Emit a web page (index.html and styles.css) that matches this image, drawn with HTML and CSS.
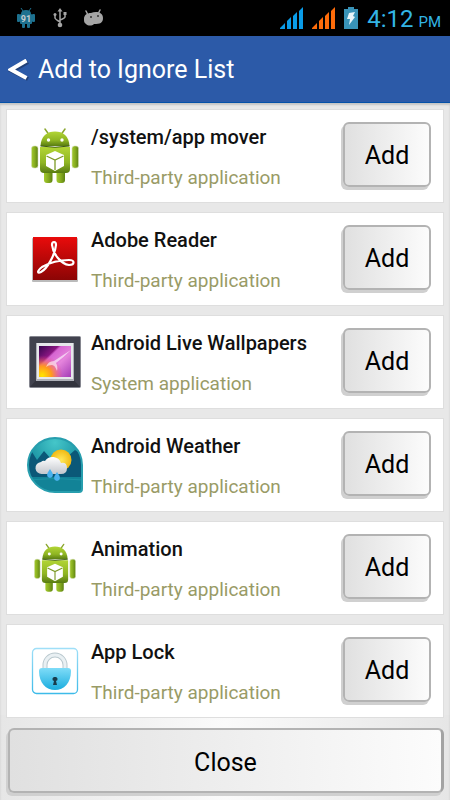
FILE: index.html
```html
<!DOCTYPE html>
<html lang="en">
<head>
    <meta charset="UTF-8">
    <meta name="viewport" content="width=device-width, initial-scale=1.0">
    <title>Add to Ignore List</title>
    <link rel="stylesheet" href="styles.css">
</head>
<body>
    <!-- shared shapes -->
    <svg class="defs" width="0" height="0" aria-hidden="true">
        <defs>
            <linearGradient id="green" x1="0" y1="0" x2="0" y2="1">
                <stop offset="0" stop-color="#b2d535"/>
                <stop offset="0.6" stop-color="#8fb522"/>
                <stop offset="1" stop-color="#587c12"/>
            </linearGradient>
            <linearGradient id="limb" x1="0" y1="0" x2="1" y2="0">
                <stop offset="0" stop-color="#a3c92c"/>
                <stop offset="0.5" stop-color="#86ac1f"/>
                <stop offset="1" stop-color="#5d8212"/>
            </linearGradient>
            <symbol id="robot" viewBox="0 0 48 56">
                <path d="M14 1l3.500 5M34 1l-3.500 5" stroke="#8aa62e" stroke-width="1.500" stroke-linecap="round"/>
                <rect x="0.500" y="18" width="6.500" height="22" rx="2.500" fill="url(#limb)" stroke="#d5dfb5" stroke-width="0.600"/>
                <rect x="41" y="18" width="6.500" height="22" rx="2.500" fill="url(#limb)" stroke="#d5dfb5" stroke-width="0.600"/>
                <rect x="13" y="40" width="8.500" height="15" rx="3" fill="url(#limb)"/>
                <rect x="25.500" y="40" width="8.500" height="15" rx="3" fill="url(#limb)"/>
                <path d="M9 19h30v22q0 4-4 4H13q-4 0-4-4z" fill="url(#green)"/>
                <path d="M9.500 18C10 8 16 3.500 24 3.500S38 8 38.500 18z" fill="url(#green)"/>
                <path d="M9.500 18q14.500 2.500 29 0" fill="none" stroke="#3c5a0c" stroke-width="1"/>
                <circle cx="17.500" cy="12" r="1.700" fill="#fff"/>
                <circle cx="31" cy="12" r="1.700" fill="#fff"/>
                <path d="M24 23l9 4v11l-9 5-9-5V27z" fill="#fff"/>
                <path d="M15.500 28l8.500 4 8.500-4M24 32v10" fill="none" stroke="#7c9a26" stroke-width="1.300"/>
            </symbol>
        </defs>
    </svg>

    <div class="status-bar">
        <div class="status-left">
            <svg width="18" height="20" viewBox="0 0 18 20" fill="#1d718f">
                <path d="M4 0l2 3M14 0l-2 3" stroke="#1d718f"/>
                <path d="M4 6q0-4 5-4t5 4z"/>
                <rect x="0" y="6" width="3" height="8" rx="1"/>
                <rect x="15" y="6" width="3" height="8" rx="1"/>
                <rect x="3" y="6" width="12" height="10" rx="1"/>
                <rect x="5" y="14" width="3" height="6" rx="1"/>
                <rect x="10" y="14" width="3" height="6" rx="1"/>
                <text class="badge" x="9" y="14" text-anchor="middle" fill="#c4ccd0">91</text>
            </svg>
            <svg width="14" height="20" viewBox="0 0 14 20" fill="none" stroke="#a5a5a5" stroke-width="1.500">
                <path d="M7 2v14M2 7v3q0 1 5 4M12 6v3q0 1-5 3"/>
                <path d="M7 0l2.500 3.500h-5z" fill="#a5a5a5" stroke="none"/>
                <circle cx="2" cy="6.500" r="1.500" fill="#a5a5a5" stroke="none"/>
                <rect x="10.500" y="4" width="3" height="3" fill="#a5a5a5" stroke="none"/>
                <circle cx="7" cy="17" r="2.300" fill="#a5a5a5" stroke="none"/>
            </svg>
            <svg width="21" height="18" viewBox="0 0 21 18">
                <path d="M3 2l2 4M17 1l-2 4" stroke="#a5a5a5" stroke-width="1.500" stroke-linecap="round"/>
                <path d="M1 10C1 6 4 4 8 4c5-2 12-1 12 5 0 5-3 6-9 6-2 2-6 2-8 0-2-1-2-3-2-5z" fill="#a5a5a5"/>
                <circle cx="8" cy="8" r="1" fill="#333"/>
                <circle cx="15" cy="7" r="1" fill="#333"/>
            </svg>
        </div>
        <div class="status-right">
            <svg class="signal-blue" width="23" height="22" viewBox="0 0 23 22">
                <path d="M0 22v-1l5-5v6zM7 22v-8l4-4v12zM13 22V9l4-4v17zM19 22V4l4-4v22z"/>
            </svg>
            <svg class="signal-orange" width="23" height="22" viewBox="0 0 23 22">
                <path d="M0 22v-1l5-5v6zM7 22v-8l4-4v12zM13 22V9l4-4v17zM19 22V4l4-4v22z"/>
            </svg>
            <svg width="14" height="22" viewBox="0 0 14 22">
                <path d="M4 0h6v2h4v20H0V2h4z" fill="#3993b8"/>
                <path d="M5 6l6-1-2 4 2 1-6 8 1-6-3 0z" fill="#e9f5fa"/>
            </svg>
            <span class="clock">4:12<small>PM</small></span>
        </div>
    </div>

    <header>
        <a href="#" class="back" aria-label="Back">
            <svg width="22" height="22" viewBox="0 0 22 22" fill="none" stroke-width="4">
                <path d="M20 3L4 12l16 8" stroke="#1d3564" opacity="0.700"/>
                <path d="M18.500 1.500L3 10.500l15.500 8.500" stroke="#fff"/>
            </svg>
        </a>
        <h1>Add to Ignore List</h1>
    </header>

    <main>
        <ul class="app-list">
            <li class="app">
                <div class="app-icon"><svg width="48" height="56"><use href="#robot"/></svg></div>
                <div class="app-info">
                    <h2>/system/app mover</h2>
                    <p>Third-party application</p>
                </div>
                <button class="add" type="button">Add</button>
            </li>
            <li class="app">
                <div class="app-icon">
                    <svg width="48" height="48" viewBox="0 0 48 48">
                        <defs>
                            <linearGradient id="red" x1="0" y1="0" x2="0" y2="1">
                                <stop offset="0" stop-color="#e90b0b"/>
                                <stop offset="1" stop-color="#8b0505"/>
                            </linearGradient>
                        </defs>
                        <rect x="1" y="3" width="46" height="44" rx="1" fill="#bbb"/>
                        <rect x="2" y="2" width="44" height="43" fill="url(#red)"/>
                        <path d="M10 37c6-3 14-17 15-27 0-4-4-4-4 0 1 9 9 19 17 20 6 0 6-5 0-5-9 0-20 3-27 7-5 4-5 7-1 5z" fill="none" stroke="#fff" stroke-width="2.200" stroke-linejoin="round"/>
                    </svg>
                </div>
                <div class="app-info">
                    <h2>Adobe Reader</h2>
                    <p>Third-party application</p>
                </div>
                <button class="add" type="button">Add</button>
            </li>
            <li class="app">
                <div class="app-icon">
                    <svg width="52" height="52" viewBox="0 0 52 52">
                        <defs>
                            <linearGradient id="aurora" x1="0" y1="0" x2="1" y2="1">
                                <stop offset="0" stop-color="#35054e"/>
                                <stop offset="0.300" stop-color="#8a1682"/>
                                <stop offset="0.350" stop-color="#d765d2"/>
                                <stop offset="0.600" stop-color="#e584dc"/>
                                <stop offset="1" stop-color="#a33cb6"/>
                            </linearGradient>
                            <radialGradient id="glow" cx="0.100" cy="0.950" r="0.650">
                                <stop offset="0" stop-color="#ffe400"/>
                                <stop offset="0.450" stop-color="#ff9a1d"/>
                                <stop offset="1" stop-color="#f0408a" stop-opacity="0"/>
                            </radialGradient>
                        </defs>
                        <rect x="0.500" y="0.500" width="51" height="51" rx="1" fill="#41424e" stroke="#85868f"/>
                        <path d="M1 51l7-8h36l7 8z" fill="#33343e"/>
                        <rect x="7" y="7" width="38" height="38" fill="#aeb0b8"/>
                        <rect x="8" y="7" width="36" height="36" fill="#e6e7ea"/>
                        <rect x="10" y="10" width="32" height="31" fill="url(#aurora)"/>
                        <rect x="10" y="10" width="32" height="31" fill="url(#glow)"/>
                        <path d="M17 31q2-6 8-6 9-6 17-11-7 7-15 13 2 3 1 8-2-6-5-6-4 0-6 2z" fill="#fff" opacity="0.600"/>
                    </svg>
                </div>
                <div class="app-info">
                    <h2>Android Live Wallpapers</h2>
                    <p>System application</p>
                </div>
                <button class="add" type="button">Add</button>
            </li>
            <li class="app">
                <div class="app-icon">
                    <svg width="56" height="56" viewBox="0 0 56 56">
                        <defs>
                            <radialGradient id="sky" cx="0.500" cy="0.100" r="0.900">
                                <stop offset="0" stop-color="#45c6c9"/>
                                <stop offset="0.600" stop-color="#178fa0"/>
                                <stop offset="1" stop-color="#0b6c86"/>
                            </radialGradient>
                            <linearGradient id="cloud" x1="0" y1="0" x2="0" y2="1">
                                <stop offset="0" stop-color="#fff"/>
                                <stop offset="1" stop-color="#c3c7cd"/>
                            </linearGradient>
                            <radialGradient id="sun">
                                <stop offset="0" stop-color="#ffe95a"/>
                                <stop offset="1" stop-color="#f0b913"/>
                            </radialGradient>
                            <clipPath id="drop"><path d="M28 1a27 27 0 0 1 27 27v24q0 3-3 3H28a27 27 0 0 1 0-54z"/></clipPath>
                        </defs>
                        <g clip-path="url(#drop)">
                            <rect width="56" height="56" fill="url(#sky)"/>
                            <path d="M0 12l5 3 5 8 7-9 8 9 8-8 7 5 8-7 8 5v24H0z" fill="#0b5878"/>
                            <rect y="40" width="56" height="16" fill="#128397"/>
                            <path d="M0 43q28-3 56 0" fill="none" stroke="#1d92a4"/>
                        </g>
                        <path d="M28 1a27 27 0 0 1 27 27v24q0 3-3 3H28a27 27 0 0 1 0-54z" fill="none" stroke="#279eae" stroke-width="2"/>
                        <circle cx="34" cy="23" r="10.500" fill="url(#sun)"/>
                        <path d="M15 37a6 6 0 0 1-1-12q2-2 4-1a9 9 0 0 1 16 2q6-1 6 5 0 6-6 6z" fill="url(#cloud)"/>
                        <path d="M23 32q-6 8 0 9 6-1 0-9zM30 35q-6 8 0 9 6-1 0-9z" fill="#4ab2ee"/>
                    </svg>
                </div>
                <div class="app-info">
                    <h2>Android Weather</h2>
                    <p>Third-party application</p>
                </div>
                <button class="add" type="button">Add</button>
            </li>
            <li class="app">
                <div class="app-icon"><svg width="42" height="50"><use href="#robot"/></svg></div>
                <div class="app-info">
                    <h2>Animation</h2>
                    <p>Third-party application</p>
                </div>
                <button class="add" type="button">Add</button>
            </li>
            <li class="app">
                <div class="app-icon">
                    <svg width="48" height="48" viewBox="0 0 48 48">
                        <defs>
                            <linearGradient id="lock" x1="0" y1="0" x2="0" y2="1">
                                <stop offset="0" stop-color="#7fdcf8"/>
                                <stop offset="1" stop-color="#1badde"/>
                            </linearGradient>
                            <linearGradient id="frame" x1="0" y1="0" x2="0" y2="1">
                                <stop offset="0" stop-color="#9fdff8"/>
                                <stop offset="1" stop-color="#3dbbe9"/>
                            </linearGradient>
                        </defs>
                        <rect x="1.500" y="1.500" width="45" height="45" rx="4" fill="#fff" stroke="url(#frame)" stroke-width="1.300"/>
                        <path d="M14 22v-4a10 10 0 0 1 20 0v4" fill="none" stroke="#b9c8ce" stroke-width="5"/>
                        <path d="M14 22v-4a10 10 0 0 1 20 0v4" fill="none" stroke="#e9f0f3" stroke-width="3"/>
                        <path d="M11 21h26q3 0 3 3c0 12-7 19-16 19S8 36 8 24q0-3 3-3z" fill="url(#lock)"/>
                        <path d="M24 30a2 2 0 0 1 1 4l1 4h-4l1-4a2 2 0 0 1 1-4z" fill="#183c4c"/>
                    </svg>
                </div>
                <div class="app-info">
                    <h2>App Lock</h2>
                    <p>Third-party application</p>
                </div>
                <button class="add" type="button">Add</button>
            </li>
        </ul>
        <button class="close" type="button">Close</button>
    </main>
</body>
</html>
```
FILE: styles.css
```css
* {
    box-sizing: border-box;
}
body {
    margin: 0;
    font-family: Roboto, sans-serif;
    background-color: #e6e6e6;
    color: #000;
}
h1, h2, p, ul {
    margin: 0;
    padding: 0;
}
svg {
    display: block;
}
.defs {
    position: absolute;
}
.status-bar {
    display: flex;
    justify-content: space-between;
    align-items: center;
    height: 36px;
    padding: 0 9px 0 17px;
    background-color: #000;
}
.status-left {
    display: flex;
    align-items: center;
    gap: 16px;
}
.status-left svg:first-child {
    margin-right: 2px;
}
.badge {
    font-size: 9px;
    font-weight: bold;
}
.status-right {
    display: flex;
    align-items: center;
    gap: 9px;
}
.signal-blue {
    fill: #0a9ce8;
}
.signal-orange {
    fill: #ff6c0a;
}
.clock {
    padding-top: 4px;
    font-size: 24px;
    line-height: 28px;
    color: #33b5e5;
}
.clock small {
    margin-left: 5px;
    font-size: 15px;
}
header {
    display: flex;
    align-items: center;
    gap: 8px;
    height: 67px;
    padding: 2px 8px 0;
    background-color: #2c5aa8;
    border-bottom: 1px solid #0551a8;
}
header h1 {
    font-size: 25px;
    font-weight: 400;
    line-height: 32px;
    color: #fff;
}
main {
    padding: 6px 6px 8px;
    background: linear-gradient(to right, #e6e6e6, #fafafa 50%, #e6e6e6) bottom / 100% 86px no-repeat, #e8e8e8;
    box-shadow: inset 0 2px 2px #c4c4c4;
}
.app-list {
    display: flex;
    flex-direction: column;
    gap: 9px;
    list-style: none;
}
.app {
    display: flex;
    align-items: center;
    height: 94px;
    padding: 0 12px 0 20px;
    background-color: #fff;
    border: 1px solid #dedede;
}
.app-icon {
    display: flex;
    justify-content: center;
    width: 56px;
    margin-right: 8px;
}
.app-info {
    flex: 1;
    padding-top: 2px;
}
.app-info h2 {
    margin-bottom: 17px;
    font-size: 20px;
    font-weight: 500;
    line-height: 24px;
    color: #111;
}
.app-info p {
    font-size: 19px;
    line-height: 24px;
    color: #999b66;
}
button {
    padding: 3px 0 0;
    font-family: inherit;
    font-size: 25px;
    color: #000;
    border: 2px solid #b3b3b3;
    border-radius: 6px;
    background: linear-gradient(to right, #e0e0e0, #fcfcfc);
}
.add {
    width: 88px;
    height: 65px;
    margin-bottom: 4px;
    box-shadow: -2px 3px 0 #d0d0d0;
}
.close {
    display: block;
    width: calc(100% - 2px);
    height: 65px;
    margin: 10px 0 0 2px;
    border-right: 3px solid #a3a3a3;
    box-shadow: -2px 3px 0 #d0d0d0;
}
```
